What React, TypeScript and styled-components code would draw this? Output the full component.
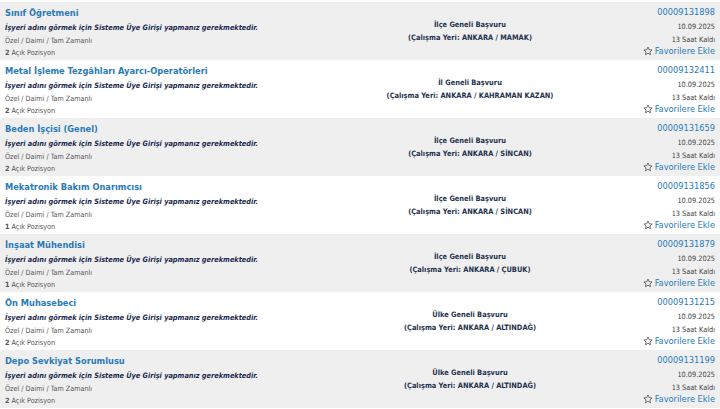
import styled, { createGlobalStyle } from 'styled-components';

// satırlar: ilan listesi
interface Job {
  title: string;
  scope: string;
  place: string;
  no: string;
  count: number;
}

const jobs: Job[] = [
  { title: 'Sınıf Öğretmeni', scope: 'İlçe Geneli Başvuru', place: 'ANKARA / MAMAK', no: '00009131898', count: 2 },
  { title: 'Metal İşleme Tezgâhları Ayarcı-Operatörleri', scope: 'İl Geneli Başvuru', place: 'ANKARA / KAHRAMAN KAZAN', no: '00009132411', count: 2 },
  { title: 'Beden İşçisi (Genel)', scope: 'İlçe Geneli Başvuru', place: 'ANKARA / SİNCAN', no: '00009131659', count: 2 },
  { title: 'Mekatronik Bakım Onarımcısı', scope: 'İlçe Geneli Başvuru', place: 'ANKARA / SİNCAN', no: '00009131856', count: 1 },
  { title: 'İnşaat Mühendisi', scope: 'İlçe Geneli Başvuru', place: 'ANKARA / ÇUBUK', no: '00009131879', count: 1 },
  { title: 'Ön Muhasebeci', scope: 'Ülke Geneli Başvuru', place: 'ANKARA / ALTINDAĞ', no: '00009131215', count: 2 },
  { title: 'Depo Sevkiyat Sorumlusu', scope: 'Ülke Geneli Başvuru', place: 'ANKARA / ALTINDAĞ', no: '00009131199', count: 2 },
];

const GlobalStyle = createGlobalStyle`
  html, body { margin: 0; padding: 0; background: #fff; }
  body { font-family: "DejaVu Sans Condensed", "DejaVu Sans", Verdana, sans-serif; }
`;

const List = styled.div`
  padding-top: 2px;
  width: 720px;
`;

const Row = styled.div<{ $odd: boolean }>`
  display: grid;
  grid-template-columns: 330px 270px 1fr;
  height: 58px;
  box-sizing: border-box;
  padding: 4px 5px 0 5px;
  background: ${(p) => (p.$odd ? '#efefef' : '#ffffff')};
`;

const Left = styled.div`
  display: flex;
  flex-direction: column;
  white-space: nowrap;
`;

const Title = styled.a`
  color: #2a7ab8;
  font-weight: bold;
  font-size: 9.2px;
  line-height: 13px;
  text-decoration: none;
`;

const Notice = styled.div`
  color: #1d2b4f;
  font-weight: bold;
  font-style: italic;
  font-size: 7.3px;
  line-height: 14px;
  margin-top: 2px;
`;

const Meta = styled.div<{ $h: number }>`
  color: #555;
  font-size: 7.2px;
  line-height: ${(p) => p.$h}px;
`;

const Center = styled.div`
  display: flex;
  flex-direction: column;
  align-items: center;
  justify-content: center;
  padding-bottom: 4px;
  color: #26334f;
  font-weight: bold;
  font-size: 7.4px;
  line-height: 13px;
`;

const Right = styled.div`
  display: flex;
  flex-direction: column;
  align-items: flex-end;
  white-space: nowrap;
`;

const JobNo = styled.a`
  color: #2a7ab8;
  font-size: 9.2px;
  line-height: 12px;
`;

const Small = styled.div<{ $h: number; $mt?: number }>`
  color: #444;
  font-size: 7.3px;
  line-height: ${(p) => p.$h}px;
  margin-top: ${(p) => p.$mt ?? 0}px;
`;

const Fav = styled.a`
  display: flex;
  align-items: center;
  gap: 2px;
  color: #2a7ab8;
  font-size: 9.2px;
  line-height: 11px;
  svg { display: block; }
`;

const Star = () => (
  <svg width="10" height="10" viewBox="0 0 24 24" fill="none" stroke="#555" strokeWidth="2" strokeLinejoin="round">
    <polygon points="12,2.5 14.9,8.9 21.8,9.6 16.6,14.2 18.1,21 12,17.5 5.9,21 7.4,14.2 2.2,9.6 9.1,8.9" />
  </svg>
);

export default function App() {
  return (
    <>
      <GlobalStyle />
      <List>
        {jobs.map((j, i) => (
          <Row key={j.no} $odd={i % 2 === 0}>
            <Left>
              <Title>{j.title}</Title>
              <Notice>İşyeri adını görmek için Sisteme Üye Girişi yapmanız gerekmektedir.</Notice>
              <Meta $h={12}>Özel / Daimi / Tam Zamanlı</Meta>
              <Meta $h={11}><b>{j.count}</b> Açık Pozisyon</Meta>
            </Left>
            <Center>
              <div>{j.scope}</div>
              <div>(Çalışma Yeri: {j.place})</div>
            </Center>
            <Right>
              <JobNo>{j.no}</JobNo>
              <Small $h={14} $mt={2}>10.09.2025</Small>
              <Small $h={11}>13 Saat Kaldı</Small>
              <Fav><Star />Favorilere Ekle</Fav>
            </Right>
          </Row>
        ))}
      </List>
    </>
  );
}
